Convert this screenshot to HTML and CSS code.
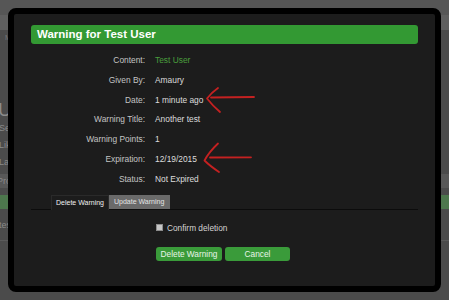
FILE: index.html
```html
<!DOCTYPE html>
<html lang="en">
<head>
  <meta charset="UTF-8">
  <meta name="viewport" content="width=device-width, initial-scale=1.0">
  <title>Warning for Test User</title>
  <link rel="stylesheet" href="styles.css">
</head>
<body>
  <!-- page behind the overlay -->
  <div class="page">
    <div class="top-band"></div>
    <div class="nav-band"></div>
    <div class="page-main">
      <p class="crumb">Members</p>
      <h1 class="page-title">User</h1>
      <p class="page-line">Seen</p>
      <p class="page-line">Likes</p>
      <p class="page-line">Last</p>
      <div class="page-box">Profile</div>
      <div class="page-green"></div>
      <p class="page-line low">test</p>
      <div class="page-rule"></div>
    </div>
  </div>

  <div class="overlay">
    <div class="modal">
      <h2 class="modal-title">Warning for Test User</h2>

      <dl class="info">
        <dt>Content:</dt><dd><a class="user-link" href="#">Test User</a></dd>
        <dt>Given By:</dt><dd>Amaury</dd>
        <dt>Date:</dt><dd>1 minute ago</dd>
        <dt>Warning Title:</dt><dd>Another test</dd>
        <dt>Warning Points:</dt><dd>1</dd>
        <dt>Expiration:</dt><dd>12/19/2015</dd>
        <dt>Status:</dt><dd>Not Expired</dd>
      </dl>

      <ul class="tabs">
        <li class="tab active">Delete Warning</li>
        <li class="tab">Update Warning</li>
      </ul>

      <div class="form-row">
        <label class="confirm"><input type="checkbox" class="check"> Confirm deletion</label>
      </div>

      <div class="form-row buttons">
        <button type="button" class="btn btn-delete">Delete Warning</button>
        <button type="button" class="btn btn-cancel">Cancel</button>
      </div>
    </div>
  </div>

  <!-- red hand-drawn arrows on top -->
  <svg class="marks" width="449" height="300" viewBox="0 0 449 300">
    <g fill="none" stroke="#c42121" stroke-width="1.8" stroke-linecap="round" stroke-linejoin="round">
      <path d="M218 88 Q211 93 207 98.5 Q212 105 220 112"/>
      <path d="M211 97.5 L254 97"/>
      <path d="M218 143.5 Q209 152 204.5 160.5 Q210 166 219 172"/>
      <path d="M210 157.5 L251 157.3"/>
    </g>
  </svg>
</body>
</html>
```

FILE: styles.css
```css
* { margin:0; padding:0; box-sizing:border-box }
body {
  width:449px; height:300px; overflow:hidden;
  background:#4b4b4b; color:#ccc;
  font-family:'Liberation Sans', Arial, sans-serif;
  position:relative;
}

/* background page */
.page { height:300px; }
.top-band { height:15px; background:#565656; }
.nav-band { height:15px; background:#5f5f5f; }
.page-main { padding-top:4px; color:#8a8a8a; font-size:9px; }
.crumb { height:14px; padding-left:5px; color:#777; font-size:7px; }
.page-title { margin-top:52px; font-size:19px; font-weight:400; line-height:20px; color:#8c8c8c; margin-left:-2px; }
.page-line { line-height:17px; margin-left:-1px; }
.page-box { margin-top:3px; height:14px; line-height:14px; background:#585858; color:#8a8a8a; padding-left:0; text-indent:-3px; }
.page-green { margin-top:7px; height:14px; background:#4d774d; }
.page-line.low { margin-top:8px; }
.page-rule { margin-top:6px; height:1px; background:#5a5a5a; }

/* modal */
.overlay { position:absolute; inset:0; padding:8px; }
.modal {
  height:284px; background:#1c1c1c;
  border:6px solid #000; border-radius:8px;
  padding:11px 17px 0 17px;
  display:flex; flex-direction:column;
}
.modal-title {
  height:19px; line-height:19px; padding-left:6px;
  background:#339933; color:#fff; border-radius:3px;
  font-size:11.5px; font-weight:700;
}

.info {
  margin-top:7px;
  display:grid; grid-template-columns:114px 1fr; column-gap:10px;
  font-size:8.4px; line-height:19.8px;
}
.info dt { text-align:right; color:#c4c4c4; }
.info dd { color:#dcdcdc; }
.user-link { color:#4a9e3c; text-decoration:none; }

.tabs {
  margin-top:5px; list-style:none;
  display:flex; align-items:flex-end;
  padding-left:20px; height:15px;
  border-bottom:1px solid #0c0c0c;
}
.tab {
  height:14px; line-height:14px; padding:0 5px;
  font-size:7px; color:#e4e4e4; background:#6a6a6a;
}
.tab.active {
  height:15px; background:#1c1c1c; color:#f0f0f0;
  border:1px solid #2a2a2a; border-bottom:none;
  padding:0 4px 0 4px; width:58px; margin-bottom:-1px;
}
.tab + .tab { margin-left:0; width:61px; }

.form-row { padding-left:125px; }
.confirm {
  margin-top:12px; display:flex; align-items:center; gap:4px;
  height:12px; font-size:8.3px; color:#d4d4d4;
}
.check {
  appearance:none; width:7px; height:7px; margin:0;
  border:1px solid #8c8c8c; background:#c6c6c6;
}
.buttons { margin-top:13px; display:flex; gap:3px; }
.btn {
  height:14px; border:none; border-radius:3px;
  background:#3a9b3a; color:#e8f4e8;
  font-family:inherit; font-size:8.3px;
}
.btn-delete { width:66px; }
.btn-cancel { width:65px; }

.marks { position:absolute; left:0; top:0; pointer-events:none; }
```
